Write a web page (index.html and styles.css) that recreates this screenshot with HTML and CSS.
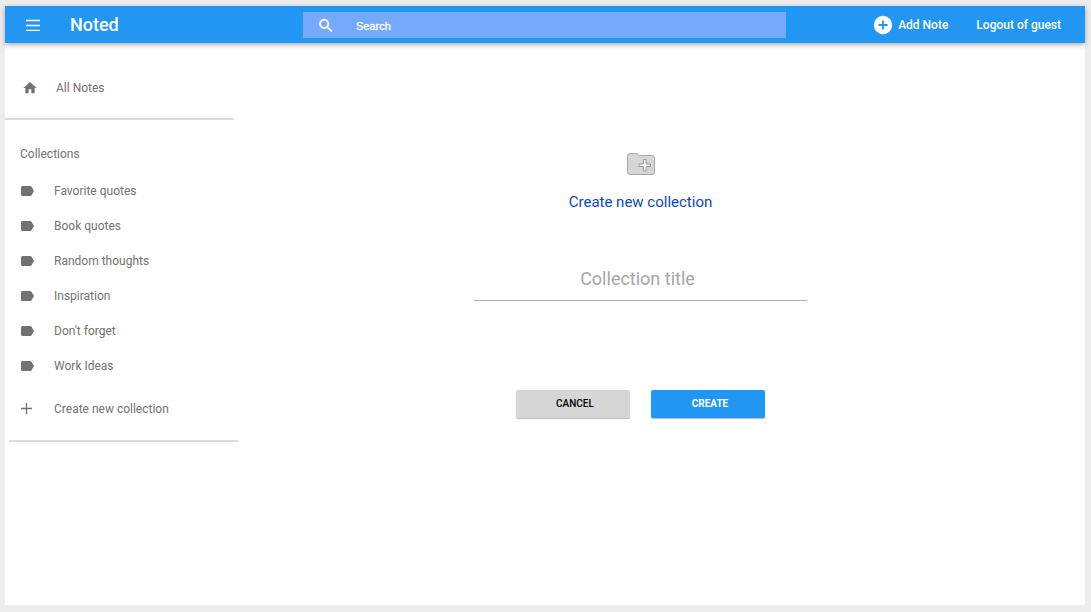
FILE: index.html
```html
<!DOCTYPE html>
<html lang="en">
<head>
<meta charset="utf-8">
<title>Noted</title>
<link rel="stylesheet" href="styles.css">
</head>
<body>
<div class="app">
  <header class="topbar">
    <div class="brand">
      <button class="icon-button" type="button" aria-label="Menu">
        <svg width="14" height="12" viewBox="0 0 14 12"><path d="M0 1.5h14M0 6.500h14M0 11.500h14" stroke="currentColor" stroke-width="1.500"/></svg>
      </button>
      <h1 class="title">Noted</h1>
    </div>
    <form class="search" role="search">
      <svg class="search-icon" width="18" height="18" viewBox="0 0 24 24" fill="currentColor" stroke="currentColor" stroke-width=".5"><path d="M15.500 15h-.79l-.28-.27A6.470 6.470 0 0 0 16 10.500 6.500 6.500 0 1 0 9.500 17c1.610 0 3.090-.59 4.230-1.570l.27.28v.79l5 4.990L20.490 20l-4.990-5zm-6 0C7.010 15 5 12.990 5 10.500S7.010 6 9.500 6 14 8.010 14 10.500 11.990 15 9.500 15z"/></svg>
      <input class="search-input" type="search" placeholder="Search" aria-label="Search">
    </form>
    <nav class="actions">
      <a class="action" href="#add"><svg width="22" height="22" viewBox="0 0 24 24" fill="currentColor"><path d="M12 2a10 10 0 1 0 0 20 10 10 0 0 0 0-20zm5 11h-4v4h-2v-4H7v-2h4V7h2v4h4v2z"/></svg>Add Note</a>
      <a class="action" href="#logout">Logout of guest</a>
    </nav>
  </header>
  <div class="body">
    <nav class="sidebar">
      <a class="home" href="#all"><svg width="16" height="16" viewBox="0 0 24 24" fill="currentColor"><path d="M10 20v-6h4v6h5v-8h3L12 3 2 12h3v8z"/></svg>All Notes</a>
      <h2 class="heading">Collections</h2>
      <ul class="list">
        <li><a class="item" href="#c1"><svg class="tag" viewBox="0 0 13 10"><path d="M1.500 0H9q.9 0 1.400.6L13 5l-2.600 4.400Q9.900 10 9 10H1.500Q0 10 0 8.500v-7Q0 0 1.500 0z"/></svg>Favorite quotes</a></li>
        <li><a class="item" href="#c2"><svg class="tag" viewBox="0 0 13 10"><path d="M1.500 0H9q.9 0 1.400.6L13 5l-2.600 4.400Q9.900 10 9 10H1.500Q0 10 0 8.500v-7Q0 0 1.500 0z"/></svg>Book quotes</a></li>
        <li><a class="item" href="#c3"><svg class="tag" viewBox="0 0 13 10"><path d="M1.500 0H9q.9 0 1.400.6L13 5l-2.600 4.400Q9.900 10 9 10H1.500Q0 10 0 8.500v-7Q0 0 1.500 0z"/></svg>Random thoughts</a></li>
        <li><a class="item" href="#c4"><svg class="tag" viewBox="0 0 13 10"><path d="M1.500 0H9q.9 0 1.400.6L13 5l-2.600 4.400Q9.900 10 9 10H1.500Q0 10 0 8.500v-7Q0 0 1.500 0z"/></svg>Inspiration</a></li>
        <li><a class="item" href="#c5"><svg class="tag" viewBox="0 0 13 10"><path d="M1.500 0H9q.9 0 1.400.6L13 5l-2.600 4.400Q9.900 10 9 10H1.500Q0 10 0 8.500v-7Q0 0 1.500 0z"/></svg>Don't forget</a></li>
        <li><a class="item" href="#c6"><svg class="tag" viewBox="0 0 13 10"><path d="M1.500 0H9q.9 0 1.400.6L13 5l-2.600 4.400Q9.900 10 9 10H1.500Q0 10 0 8.500v-7Q0 0 1.500 0z"/></svg>Work Ideas</a></li>
      </ul>
      <button class="item new" type="button"><svg class="plus" viewBox="0 0 13 13"><path d="M5.500 1v11M0 6.500h11" stroke="currentColor" stroke-width="1.300"/></svg>Create new collection</button>
      <hr class="rule">
    </nav>
    <main class="main">
      <form class="create">
        <svg class="folder" width="30" height="24" viewBox="0 0 30 24" stroke="#a6a6a6"><path d="M4 1.500h6.500q1 0 1.700.8l1.300 1.200H26q2.500 0 2.500 2.500v14q0 2.500-2.500 2.500H4q-2.500 0-2.500-2.500V4Q1.500 1.500 4 1.500z" fill="#d6d6d6"/><path d="M17.500 7.500h2.500V12H24.500v2.500H20V19h-2.500v-4.500H13V12h4.500z" fill="#fff" stroke="#999"/></svg>
        <label class="caption" for="name">Create new collection</label>
        <input class="name" id="name" type="text" placeholder="Collection title">
        <div class="buttons">
          <button class="button cancel" type="button">CANCEL</button>
          <button class="button submit" type="button">CREATE</button>
        </div>
      </form>
    </main>
  </div>
</div>
</body>
</html>
```
FILE: styles.css
```css
* { box-sizing: border-box; }

body {
  margin: 0;
  padding: 6px 6px 7px 5px;
  min-height: 100vh;
  display: flex;
  background: #ededed;
  font: 12px/16px Roboto, "Liberation Sans", sans-serif;
  color: #727272;
}

a { color: inherit; text-decoration: none; }
button, input { font: inherit; color: inherit; border: 0; background: none; padding: 0; margin: 0; }
svg { display: block; flex: none; fill: currentColor; }

.app { flex: 1; display: flex; flex-direction: column; background: #fff; }

.topbar {
  display: flex;
  align-items: center;
  height: 37px;
  padding: 0 24px 0 21px;
  background: #2196f3;
  color: #fff;
  box-shadow: 0 2px 5px rgba(0, 0, 0, .32);
}
.brand { flex: 0 0 277px; display: flex; align-items: center; gap: 30px; }
.title { margin: 0; font-size: 18px; line-height: 24px; font-weight: 500; }
.search {
  flex: 1;
  display: flex;
  align-items: center;
  gap: 21px;
  height: 26px;
  padding: 1px 15px 0 14px;
  background: #75a9fb;
}
.search-input { flex: 1; min-width: 0; font: 11px/18px "Liberation Sans", sans-serif; padding-top: 1px; -webkit-text-stroke: 0.3px #fff; }
.search-input::placeholder { color: #fff; opacity: 1; }
.actions { flex: 0 0 275px; display: flex; justify-content: flex-end; gap: 28px; font-weight: 500; }
.action { display: flex; align-items: center; gap: 4px; }

.body { flex: 1; display: flex; }
.sidebar { flex: 0 0 233px; padding-bottom: 24px; }
.home {
  display: flex;
  align-items: center;
  gap: 18px;
  width: 229px;
  height: 77px;
  padding: 15px 0 0 17px;
  border-bottom: 2px solid #dcdcdc;
}
.heading { margin: 26px 0 0 15px; font-size: 12px; line-height: 16px; font-weight: 400; }
.list { list-style: none; margin: 11px 0 0; padding: 0; }
.item { display: flex; align-items: center; height: 35px; gap: 20px; padding-left: 16px; }
.new { margin-top: 8px; }
.tag { width: 13px; height: 10px; }
.plus { width: 13px; height: 13px; }
.rule { margin: 14px 0 0 4px; border: 0; height: 2px; background: #dcdcdc; }

.main { flex: 1; display: flex; justify-content: center; padding: 109px 42px 0 0; }
.create { display: flex; flex-direction: column; align-items: center; width: 333px; }
.caption { margin-top: 16px; font-size: 15px; line-height: 20px; color: #0d47c4; }
.name {
  width: 100%;
  height: 45px;
  margin-top: 44px;
  padding: 0 6px 0 0;
  border-bottom: 1px solid #b0b0b0;
  font-size: 18px;
  line-height: 24px;
  text-align: center;
}
.name::placeholder { color: #a6a6a6; opacity: 1; }
.buttons { display: flex; gap: 21px; margin-top: 89px; }
.button { width: 114px; height: 28px; padding-left: 4px; border-radius: 2px; font-size: 10px; box-shadow: 0 1px 1px rgba(0, 0, 0, .28); }
.cancel { background: #d6d6d6; color: #000; font-weight: 500; }
.submit { background: #2196f3; color: #fff; font-weight: 700; }
```
